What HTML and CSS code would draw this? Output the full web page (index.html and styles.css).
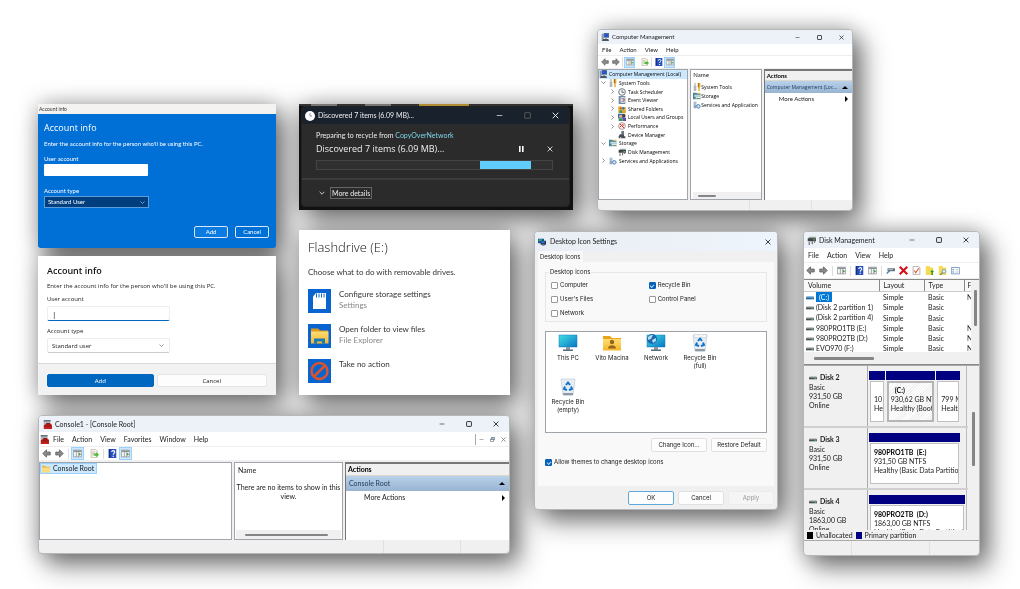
FILE: index.html
```html
<!DOCTYPE html>
<html lang="en">
<head>
<meta charset="utf-8">
<title>Windows</title>
<link rel="stylesheet" href="styles.css">
</head>
<body>
<svg class="sprite" aria-hidden="true">
  <defs>
    <linearGradient id="screen" x1="0" y1="0" x2="1" y2="1"><stop offset="0" stop-color="#3fe0e4"/><stop offset="1" stop-color="#0a74c4"/></linearGradient>
    <linearGradient id="gold" x1="0" y1="0" x2="0" y2="1"><stop offset="0" stop-color="#ffdc74"/><stop offset="1" stop-color="#f5b72c"/></linearGradient>
  </defs>
  <symbol id="min" viewBox="0 0 10 10"><path d="M1 5h8" stroke="currentColor" fill="none"/></symbol>
  <symbol id="max" viewBox="0 0 10 10"><rect x="1" y="1" width="8" height="8" rx="1" stroke="currentColor" stroke-width="1.5" fill="none"/></symbol>
  <symbol id="close" viewBox="0 0 10 10"><path d="M1 1l8 8M9 1l-8 8" stroke="currentColor" stroke-width="1.4" fill="none"/></symbol>
  <symbol id="restore" viewBox="0 0 10 10"><path d="M1 4h6v5H1zM3 4V1h6v5H7M1 5h6M3 2h6" stroke="currentColor" stroke-width="1.2" fill="none"/></symbol>
  <symbol id="down" viewBox="0 0 10 10"><path d="M1 3l4 4 4-4" stroke="currentColor" stroke-width="1.4" fill="none"/></symbol>
  <symbol id="right" viewBox="0 0 10 10"><path d="M3 1l4 4-4 4" stroke="currentColor" stroke-width="1.4" fill="none"/></symbol>
  <symbol id="back" viewBox="0 0 12 12"><path d="M1 6l5-5v3h5v4H6v3z" fill="#8b8b8b" stroke="#5b5b5b"/></symbol>
  <symbol id="forward" viewBox="0 0 12 12"><path d="M11 6L6 1v3H1v4h5v3z" fill="#8b8b8b" stroke="#5b5b5b"/></symbol>
  <symbol id="pane" viewBox="0 0 12 12"><path d="M.5 1.500h11v9H.5z" fill="#f4f4f4" stroke="#8a8f94"/><path d="M1 2h10v2H1z" fill="#8a8f94"/><path d="M4.500 4v6.500M7.500 4v6.500" stroke="#8a8f94"/><path d="M8 5l3 2-3 2z" fill="#3aa541"/></symbol>
  <symbol id="export" viewBox="0 0 12 12"><path d="M1.500.5h6l2 2v9h-8z" fill="#fbf8e8" stroke="#b5b19c"/><path d="M3 4h4M3 6h3M3 8h3" stroke="#aaa"/><path d="M5.500 6h3V4l3.500 3.500L8.500 11V9h-3z" fill="#4dbb36"/></symbol>
  <symbol id="help" viewBox="0 0 12 12"><path d="M1 0h10v12H1z" fill="#2a4fc0"/><path d="M1 0h2v12H1z" fill="#173184"/><path d="M5 4c0-2.500 4-2.300 4 0 0 1.500-2 1.500-2 3.500M7 9v1.500" stroke="#fff" stroke-width="1.500" fill="none"/></symbol>
  <symbol id="pc" viewBox="0 0 12 12"><path d="M1 1h3v9H1z" fill="#8a98a8"/><path d="M4 0h8v7H4z" fill="#5f6f84"/><path d="M5 1h6v5H5z" fill="#2452d8"/><path d="M3 9h8l1 3H1z" fill="#4e565e"/><path d="M6 7h3v2H6z" fill="#9aa4ae"/></symbol>
  <symbol id="tools" viewBox="0 0 12 12"><path d="M2 0h2v4h1v8H1V4h1z" fill="#b4b8bc"/><path d="M7 0h4v6l-1 1v5H8V7L7 6z" fill="#e6a623"/><path d="M8 0h1v6H8z" fill="#85621c"/></symbol>
  <symbol id="clock" viewBox="0 0 12 12"><circle cx="6" cy="6" r="5" fill="#f3f7fb" stroke="#6e7a86" stroke-width="1.500"/><path d="M6 3v3.500h3" stroke="#333" fill="none"/></symbol>
  <symbol id="event" viewBox="0 0 12 12"><path d="M1 0h10v12H1z" fill="#7588a8"/><path d="M4 2h6v8H4z" fill="#f7efe0"/><path d="M5 4h4M5 8h4" stroke="#2f5fbe"/><path d="M6 6l4-2v3z" fill="#d43b2f"/></symbol>
  <symbol id="shared" viewBox="0 0 12 12"><path d="M0 2h5l1 1h6v9H0z" fill="#f1c64f"/><circle cx="4" cy="5" r="2" fill="#d4702f"/><circle cx="8" cy="5" r="2" fill="#3b73c2"/><path d="M2 8h4v4H2z" fill="#38995c"/><path d="M6 8h5v4H6z" fill="#e8953c"/></symbol>
  <symbol id="users" viewBox="0 0 12 12"><path d="M0 1h10v7H0z" fill="#3b68ba"/><circle cx="4" cy="5" r="2.400" fill="#e2b183"/><circle cx="9" cy="4" r="2.400" fill="#5a3d2a"/><path d="M1 8h6v4H1z" fill="#3d9657"/><path d="M7 7h5v5H7z" fill="#5b4fb0"/></symbol>
  <symbol id="perf" viewBox="0 0 12 12"><circle cx="6" cy="6" r="5" fill="#fff" stroke="#8b5a5a"/><path d="M3 3l6 6M3 8l3-4 3 1" stroke="#d6322b" stroke-width="1.500" fill="none"/></symbol>
  <symbol id="device" viewBox="0 0 12 12"><path d="M5 0h4v5H5z" fill="#6c7680"/><path d="M1 8l2-3h6v3zM1 8h10v3H1z" fill="#454c54"/><path d="M3 9h2v1H3z" fill="#fff"/></symbol>
  <symbol id="storage" viewBox="0 0 12 12"><path d="M0 1h5l1 1h5v9H0z" fill="#4a8695"/><path d="M2 4h10v3H2z" fill="#bcd9df"/><path d="M4 7h8v5H4z" fill="#e3e9eb"/><path d="M5 9h6v1H5z" fill="#3f8246"/><path d="M7 1h4v2H7z" fill="#e5bd45"/></symbol>
  <symbol id="drive" viewBox="0 0 12 12"><path d="M1 3h10l1 2H0z" fill="#c3c7ca"/><path d="M0 5h12v3H0z" fill="#4b4f52"/><path d="M8 6h3v1H8z" fill="#4edb63"/></symbol>
  <symbol id="drivesel" viewBox="0 0 12 12"><path d="M1 3h10l1 2H0z" fill="#8dbbe2"/><path d="M0 5h12v3H0z" fill="#1f5f9c"/><path d="M8 6h3v1H8z" fill="#3bb0c0"/></symbol>
  <symbol id="diskman" viewBox="0 0 12 12"><path d="M3 1h9l-1 3H1z" fill="#9a9fa3"/><path d="M1 3h11v4H1z" fill="#3e4346"/><path d="M3 8v4M7 7v4M10 7v2" stroke="#666" stroke-width="1.500"/><path d="M8 4.500h3v1H8z" fill="#67d66c"/></symbol>
  <symbol id="services" viewBox="0 0 12 12"><path d="M1 1h4v10H1z" fill="#8fa5bc"/><path d="M2 3h2M2 5h2" stroke="#fff"/><circle cx="8" cy="8" r="2.700" fill="#cfe1f4" stroke="#5684b5" stroke-width="1.500"/></symbol>
  <symbol id="folder" viewBox="0 0 12 12"><path d="M0 1h5l1 1.500h6V11H0z" fill="#e6b949"/><path d="M0 4h12v7H0z" fill="#fbdc83"/></symbol>
  <symbol id="mmc" viewBox="0 0 12 12"><path d="M1 0h9v7H1z" fill="#aeb5bd"/><path d="M1 0h9v2H1z" fill="#69737e"/><path d="M3 6l2-2h4l2 2h1v6H1V7z" fill="#c5201f"/><path d="M5 6V5h4v1M2 8h9" stroke="#641313" fill="none"/></symbol>
  <symbol id="redx" viewBox="0 0 12 12"><path d="M1 1l10 10M11 1L1 11" stroke="#d60b17" stroke-width="2.800"/></symbol>
  <symbol id="check" viewBox="0 0 12 12"><path d="M1.500.5h7l2 2v9h-9z" fill="#fff" stroke="#9b9b9b"/><path d="M3 6l2 3 4-6" stroke="#e4572b" stroke-width="1.500" fill="none"/></symbol>
  <symbol id="folderup" viewBox="0 0 12 12"><path d="M1 0h5l1 2h4v10H1z" fill="#f7da57"/><path d="M8.500 12V8H7l2.500-3L12 8h-1.500v4z" fill="#299b2b"/></symbol>
  <symbol id="search" viewBox="0 0 12 12"><path d="M1 0h5l1 2h4v10H1z" fill="#f7da57"/><circle cx="8" cy="7" r="2.500" fill="#d9ecfa" stroke="#6290b8"/><path d="M6 9l-3 3" stroke="#6b7b88" stroke-width="1.500"/></symbol>
  <symbol id="props" viewBox="0 0 12 12"><path d="M.5 2h11v8.500H.5z" fill="#fff" stroke="#5d86b4"/><path d="M2 5h2M2 8h2" stroke="#2d77c9" stroke-width="1.500"/><path d="M6 5h4M6 8h4" stroke="#aaa"/></symbol>
  <symbol id="cable" viewBox="0 0 12 12"><path d="M2 3h10v4H2z" fill="#6c7479"/><path d="M3 4h6v1H3z" fill="#c6d6df"/><path d="M1 10l4-4" stroke="#4584b0" stroke-width="2"/></symbol>
  <symbol id="monitor" viewBox="0 0 20 18"><path d="M1 1h18v12H1z" fill="url(#screen)" stroke="#1278b4" stroke-width=".5"/><path d="M8 13h4v3H8z" fill="#8c9aa5"/><path d="M5 15.500h10V17H5z" fill="#5d6d79"/></symbol>
  <symbol id="network" viewBox="0 0 20 18"><use href="#monitor"/><circle cx="6" cy="5" r="5" fill="#1a68ad"/><path d="M2 3c2-2 4-2 5-2L5 5 2 6zM6 6l4-2v3L7 9z" fill="#b3dcf2"/></symbol>
  <symbol id="userfolder" viewBox="0 0 20 18"><path d="M1 2h7l2 2h9v4H1z" fill="#e8a51b"/><path d="M1 5h18v11.500H1z" fill="url(#gold)"/><circle cx="10" cy="8" r="2.200" fill="#96641a"/><path d="M6 14.500c0-4.500 8-4.500 8 0z" fill="#96641a"/></symbol>
  <symbol id="bin" viewBox="0 0 20 18"><path d="M3 1h14l-2 16H5z" fill="#e7edf2" stroke="#c2cbd2" stroke-width=".7"/><path d="M5 15h10l-.3 2.300H5.300z" fill="#8f9aa2"/><path d="M8 7l2-2.500L12 7M13 8.500l1 2.500-3 1M9 12l-3-1 1-2.500" fill="none" stroke="#0d72cd" stroke-width="2"/></symbol>
  <symbol id="fullbin" viewBox="0 0 20 18"><use href="#bin"/><path d="M3 2l3-2 2 1 3-1 2 1 3-1 1 3-3 1-3-1-3 1-4-1z" fill="#f9fafb" stroke="#aeb6bd" stroke-width=".5"/></symbol>
  <symbol id="display" viewBox="0 0 12 12"><path d="M0 1h9v7H0z" fill="#1d4ea8"/><path d="M1 2h5v3H1z" fill="#35b84b"/><path d="M4 4h8v6H4z" fill="#1f2f55"/><path d="M5 5h5v3H5z" fill="#2c7de0"/><path d="M6 10h4v2H6z" fill="#8b98a5"/></symbol>
  <symbol id="sdcard" viewBox="0 0 23 23"><path d="M8 3.500h10v16H5V7z" fill="#fff"/><path d="M8.500 4v4M11 4v4M13.500 4v4M16 4v4" stroke="#0a64cf"/></symbol>
  <symbol id="explorer" viewBox="0 0 23 23"><path d="M3 4h7l2 2h8v5H3z" fill="#dc9a1d"/><path d="M3 7h17.500v12H3z" fill="url(#gold)"/><path d="M6 19v-5h11v5h-3v-2H9v2z" fill="#187cb6"/></symbol>
  <symbol id="noaction" viewBox="0 0 23 23"><circle cx="11.500" cy="11.500" r="8" fill="none" stroke="#d9532c" stroke-width="2.500"/><path d="M6 17L17 6" stroke="#d9532c" stroke-width="2.500"/></symbol>
</svg>

<main class="desktop">

  <section class="win oobe">
    <header class="oobe-title">Account info</header>
    <form class="oobe-body">
      <h2>Account info</h2>
      <p>Enter the account info for the person who'll be using this PC.</p>
      <label for="ua1">User account</label>
      <input id="ua1" type="text">
      <label for="at1">Account type</label>
      <div class="pick"><select id="at1"><option>Standard User</option></select><svg><use href="#down"/></svg></div>
      <div class="oobe-actions"><button type="button" class="add">Add</button><button type="button">Cancel</button></div>
    </form>
  </section>

  <section class="win modern">
    <form>
      <div class="modern-body">
        <h2>Account info</h2>
        <p>Enter the account info for the person who'll be using this PC.</p>
        <label for="ua2">User account</label>
        <input id="ua2" type="text" value="|">
        <label for="at2">Account type</label>
        <div class="pick"><select id="at2"><option>Standard user</option></select><svg><use href="#down"/></svg></div>
      </div>
      <div class="modern-actions"><button type="button" class="primary">Add</button><button type="button">Cancel</button></div>
    </form>
  </section>

  <section class="win recycle">
    <div class="behind"><i></i><i></i><i></i></div>
    <div class="recycle-inner">
      <header><svg class="clock"><circle cx="5" cy="5" r="5" fill="#fff"/><path d="M5 2v3h2" stroke="#999" fill="none"/></svg><span>Discovered 7 items (6.09 MB)...</span>
        <div class="caption"><button aria-label="Minimize"><svg><use href="#min"/></svg></button><button aria-label="Maximize" class="off"><svg><use href="#max"/></svg></button><button aria-label="Close"><svg><use href="#close"/></svg></button></div>
      </header>
      <div class="recycle-body">
        <p>Preparing to recycle from <a href="#">CopyOverNetwork</a></p>
        <div class="status"><strong>Discovered 7 items (6.09 MB)...</strong><button aria-label="Pause"><svg viewBox="0 0 6 6"><path d="M1 0h1.600v6H1zM4 0h1.600v6H4z" fill="#fff"/></svg></button><button aria-label="Cancel"><svg><use href="#close"/></svg></button></div>
        <div class="progress"><span></span></div>
      </div>
      <footer><svg><use href="#down"/></svg><button>More details</button></footer>
    </div>
  </section>

  <section class="win flash">
    <h2>Flashdrive (E:)</h2>
    <p>Choose what to do with removable drives.</p>
    <ul>
      <li><svg><use href="#sdcard"/></svg><div>Configure storage settings<small>Settings</small></div></li>
      <li><svg><use href="#explorer"/></svg><div>Open folder to view files<small>File Explorer</small></div></li>
      <li><svg><use href="#noaction"/></svg><div>Take no action</div></li>
    </ul>
  </section>

  <section class="win mmc manage">
    <header class="title"><svg class="ico"><use href="#pc"/></svg><span>Computer Management</span>
      <div class="caption"><button aria-label="Minimize"><svg><use href="#min"/></svg></button><button aria-label="Maximize"><svg><use href="#max"/></svg></button><button aria-label="Close"><svg><use href="#close"/></svg></button></div></header>
    <nav class="menu"><button>File</button><button>Action</button><button>View</button><button>Help</button></nav>
    <div class="tools"><button aria-label="Back"><svg><use href="#back"/></svg></button><button aria-label="Forward"><svg><use href="#forward"/></svg></button><hr><button class="on" aria-label="Tree"><svg><use href="#pane"/></svg></button><button class="apart" aria-label="Export"><svg><use href="#export"/></svg></button><hr><button aria-label="Help"><svg><use href="#help"/></svg></button><button class="on" aria-label="Actions"><svg><use href="#pane"/></svg></button></div>
    <div class="panes">
      <ul class="pane tree">
        <li class="l0 sel"><svg class="ico"><use href="#pc"/></svg>Computer Management (Local)</li>
        <li class="l1"><svg class="tw"><use href="#down"/></svg><svg class="ico"><use href="#tools"/></svg>System Tools</li>
        <li class="l2"><svg class="tw"><use href="#right"/></svg><svg class="ico"><use href="#clock"/></svg>Task Scheduler</li>
        <li class="l2"><svg class="tw"><use href="#right"/></svg><svg class="ico"><use href="#event"/></svg>Event Viewer</li>
        <li class="l2"><svg class="tw"><use href="#right"/></svg><svg class="ico"><use href="#shared"/></svg>Shared Folders</li>
        <li class="l2"><svg class="tw"><use href="#right"/></svg><svg class="ico"><use href="#users"/></svg>Local Users and Groups</li>
        <li class="l2"><svg class="tw"><use href="#right"/></svg><svg class="ico"><use href="#perf"/></svg>Performance</li>
        <li class="l2"><svg class="tw"></svg><svg class="ico"><use href="#device"/></svg>Device Manager</li>
        <li class="l1"><svg class="tw"><use href="#down"/></svg><svg class="ico"><use href="#storage"/></svg>Storage</li>
        <li class="l2"><svg class="tw"></svg><svg class="ico"><use href="#diskman"/></svg>Disk Management</li>
        <li class="l1"><svg class="tw"><use href="#right"/></svg><svg class="ico"><use href="#services"/></svg>Services and Applications</li>
      </ul>
      <div class="pane list">
        <div class="name">Name</div>
        <ul>
          <li><svg class="ico"><use href="#tools"/></svg>System Tools</li>
          <li><svg class="ico"><use href="#storage"/></svg>Storage</li>
          <li><svg class="ico"><use href="#services"/></svg>Services and Application</li>
        </ul>
        <div class="hscroll"><span></span></div>
      </div>
      <aside class="pane actions"><h3>Actions</h3><div class="bar"><span>Computer Management (Loc...</span><i class="up"></i></div><button>More Actions<i class="side"></i></button></aside>
    </div>
    <footer class="statusbar"><span></span><span></span><span></span></footer>
  </section>

  <section class="win icons">
    <header class="title"><svg class="ico"><use href="#display"/></svg><span>Desktop Icon Settings</span>
      <div class="caption"><button aria-label="Close"><svg><use href="#close"/></svg></button></div></header>
    <form>
      <button type="button" class="tab">Desktop Icons</button>
      <div class="page">
        <fieldset><legend>Desktop icons</legend>
          <label><input type="checkbox">Computer</label><label><input type="checkbox" checked>Recycle Bin</label>
          <label><input type="checkbox">User's Files</label><label><input type="checkbox">Control Panel</label>
          <label><input type="checkbox">Network</label>
        </fieldset>
        <ul class="grid">
          <li><svg><use href="#monitor"/></svg>This PC</li>
          <li><svg><use href="#userfolder"/></svg>Vito Macina</li>
          <li><svg><use href="#network"/></svg>Network</li>
          <li><svg><use href="#fullbin"/></svg>Recycle Bin<br>(full)</li>
          <li><svg><use href="#bin"/></svg>Recycle Bin<br>(empty)</li>
        </ul>
        <div class="row"><button type="button">Change Icon...</button><button type="button">Restore Default</button></div>
        <label class="allow"><input type="checkbox" checked>Allow themes to change desktop icons</label>
      </div>
      <div class="ok-row"><button type="button" class="default">OK</button><button type="button">Cancel</button><button type="button" disabled>Apply</button></div>
    </form>
  </section>

  <section class="win mmc big console">
    <header class="title"><svg class="ico"><use href="#mmc"/></svg><span>Console1 - [Console Root]</span>
      <div class="caption"><button aria-label="Minimize"><svg><use href="#min"/></svg></button><button aria-label="Maximize"><svg><use href="#max"/></svg></button><button aria-label="Close"><svg><use href="#close"/></svg></button></div></header>
    <nav class="menu"><svg class="ico"><use href="#mmc"/></svg><button>File</button><button>Action</button><button>View</button><button>Favorites</button><button>Window</button><button>Help</button>
      <div class="mdi"><button aria-label="Minimize child"><svg><use href="#min"/></svg></button><button aria-label="Restore child"><svg><use href="#restore"/></svg></button><button aria-label="Close child"><svg><use href="#close"/></svg></button></div></nav>
    <div class="tools"><button aria-label="Back"><svg><use href="#back"/></svg></button><button aria-label="Forward"><svg><use href="#forward"/></svg></button><hr><button class="on" aria-label="Tree"><svg><use href="#pane"/></svg></button><button class="apart" aria-label="Export"><svg><use href="#export"/></svg></button><hr><button aria-label="Help"><svg><use href="#help"/></svg></button><button class="on" aria-label="Actions"><svg><use href="#pane"/></svg></button></div>
    <div class="panes">
      <ul class="pane tree"><li class="sel"><svg class="ico"><use href="#folder"/></svg>Console Root</li></ul>
      <div class="pane list"><div class="name">Name</div><p>There are no items to show in this view.</p><div class="hscroll"><span></span></div></div>
      <aside class="pane actions"><h3>Actions</h3><div class="bar"><span>Console Root</span><i class="up"></i></div><button>More Actions<i class="side"></i></button></aside>
    </div>
    <footer class="statusbar"><span></span><span></span><span></span></footer>
  </section>

  <section class="win mmc big disks">
    <header class="title"><svg class="ico"><use href="#diskman"/></svg><span>Disk Management</span>
      <div class="caption"><button aria-label="Minimize"><svg><use href="#min"/></svg></button><button aria-label="Maximize"><svg><use href="#max"/></svg></button><button aria-label="Close"><svg><use href="#close"/></svg></button></div></header>
    <nav class="menu"><button>File</button><button>Action</button><button>View</button><button>Help</button></nav>
    <div class="tools"><button aria-label="Back"><svg><use href="#back"/></svg></button><button aria-label="Forward"><svg><use href="#forward"/></svg></button><hr><button aria-label="Tree"><svg><use href="#pane"/></svg></button><hr><button aria-label="Help"><svg><use href="#help"/></svg></button><button aria-label="Panes"><svg><use href="#pane"/></svg></button><hr><button aria-label="Connect"><svg><use href="#cable"/></svg></button><button aria-label="Delete"><svg><use href="#redx"/></svg></button><button aria-label="Check"><svg><use href="#check"/></svg></button><button aria-label="Up"><svg><use href="#folderup"/></svg></button><button aria-label="Find"><svg><use href="#search"/></svg></button><button aria-label="Properties"><svg><use href="#props"/></svg></button></div>
    <div class="volumes">
      <table>
        <colgroup><col class="c1"><col class="c2"><col class="c3"><col></colgroup>
        <thead><tr><th>Volume</th><th>Layout</th><th>Type</th><th>F</th></tr></thead>
        <tbody>
          <tr class="cur"><td><svg class="ico"><use href="#drivesel"/></svg><span>(C:)</span></td><td>Simple</td><td>Basic</td><td>N</td></tr>
          <tr><td><svg class="ico"><use href="#drive"/></svg>(Disk 2 partition 1)</td><td>Simple</td><td>Basic</td><td></td></tr>
          <tr><td><svg class="ico"><use href="#drive"/></svg>(Disk 2 partition 4)</td><td>Simple</td><td>Basic</td><td></td></tr>
          <tr><td><svg class="ico"><use href="#drive"/></svg>980PRO1TB (E:)</td><td>Simple</td><td>Basic</td><td>N</td></tr>
          <tr><td><svg class="ico"><use href="#drive"/></svg>980PRO2TB (D:)</td><td>Simple</td><td>Basic</td><td>N</td></tr>
          <tr><td><svg class="ico"><use href="#drive"/></svg>EVO970 (F:)</td><td>Simple</td><td>Basic</td><td>N</td></tr>
        </tbody>
      </table>
      <div class="vscroll"><span></span></div>
      <div class="hscroll"><span></span></div>
    </div>
    <div class="map">
      <div class="disk-list">
        <div class="disk"><div class="info"><b><svg class="ico"><use href="#drive"/></svg>Disk 2</b>Basic<br>931,50 GB<br>Online</div>
          <div class="parts three"><div class="part"><p><br>10<br>He</p></div><div class="part hatch"><p><b>(C:)</b><br>930,62 GB NTFS<br>Healthy (Boot)</p></div><div class="part"><p><br>799 MB<br>Healthy</p></div></div></div>
        <div class="disk"><div class="info"><b><svg class="ico"><use href="#drive"/></svg>Disk 3</b>Basic<br>931,50 GB<br>Online</div>
          <div class="parts"><div class="part"><p><b>980PRO1TB &nbsp;(E:)</b><br>931,50 GB NTFS<br>Healthy (Basic Data Partition)</p></div></div></div>
        <div class="disk"><div class="info"><b><svg class="ico"><use href="#drive"/></svg>Disk 4</b>Basic<br>1863,00 GB<br>Online</div>
          <div class="parts wide"><div class="part"><p><b>980PRO2TB &nbsp;(D:)</b><br>1863,00 GB NTFS<br>Healthy (Basic Data Partition)</p></div></div></div>
      </div>
      <div class="vscroll"><span></span></div>
    </div>
    <div class="legend"><i></i>Unallocated<i class="navy"></i>Primary partition</div>
    <footer class="statusbar"><span></span><span></span><span></span></footer>
  </section>
</main>
</body>
</html>
```
FILE: styles.css
```css
* { box-sizing: border-box; margin: 0; padding: 0; }
body { background: #fff; color: #1a1a1a; font-family: Lato, "Open Sans", sans-serif; }
.sprite { position: absolute; width: 0; height: 0; }
ul { list-style: none; }
svg { display: block; flex: none; width: 8px; height: 8px; }
button, input, select { font: inherit; color: inherit; border: 0; background: none; }
select { appearance: none; width: 100%; }
a { text-decoration: none; }

/* column fractions follow the window; each window starts on a row line */
.desktop {
  display: grid;
  min-height: 100vh;
  grid-template-columns:
    minmax(0, 38fr) minmax(0, 238fr) minmax(0, 23fr) minmax(0, 211fr)
    minmax(0, 24fr) minmax(0, 39fr) minmax(0, 24fr) minmax(0, 181fr)
    minmax(0, 25fr) minmax(0, 50fr) minmax(0, 127fr) minmax(0, 40fr);
  grid-template-rows: 29px 75px 126px 1px 25px 159px 1fr;
  filter: drop-shadow(0 0 11px rgba(0, 0, 0, .28)) drop-shadow(9px 11px 12px rgba(0, 0, 0, .48));
}
.win { align-self: start; overflow: hidden; background: #fff; }
.oobe { grid-area: 3 / 2 / 8 / 3; }
.modern { grid-area: 6 / 2 / 8 / 3; }
.recycle { grid-area: 3 / 4 / 8 / 7; }
.flash { grid-area: 4 / 4 / 8 / 5; }
.manage { grid-area: 2 / 8 / 8 / 11; }
.icons { grid-area: 5 / 6 / 8 / 9; }
.disks { grid-area: 5 / 10 / 8 / 12; }
.console { grid-area: 7 / 2 / 8 / 5; }

.pick { position: relative; }
.pick svg { position: absolute; right: 4px; top: 4px; width: 5px; height: 5px; }

/* account dialogs */
.oobe { font-size: 6px; line-height: 8px; background: #006fd6; color: #fff; border-radius: 0 0 3px 3px; }
.oobe-title { background: #f5f3f2; color: #333; font-size: 5px; line-height: 10px; padding-left: 1px; }
.oobe-body { padding: 8px 7px 10px 6px; }
.oobe h2 { font: 9px/12px "Open Sans", sans-serif; margin-bottom: 6px; }
.oobe p { margin-bottom: 7px; }
.oobe label { display: block; margin-bottom: 1px; }
.oobe input { display: block; width: 104px; height: 12px; background: #fff; color: #000; border-radius: 1px; margin-bottom: 11px; }
.oobe .pick { width: 105px; margin-bottom: 18px; }
.oobe .pick svg { color: #9cc4ea; }
.oobe select { display: block; height: 12px; background: #003e7e; border: 1px solid #5a9fdc; padding: 0 3px; }
.oobe-actions { display: flex; justify-content: flex-end; gap: 7px; }
.oobe-actions button { width: 34px; height: 12px; border: 1px solid #d5e8fa; border-radius: 2px; }
.oobe-actions .add { background: #0a7be0; }

.modern { font: 6px/8px "Open Sans", sans-serif; color: #222; }
.modern-body { padding: 9px 9px 10px; }
.modern h2 { font-size: 9px; line-height: 12px; font-weight: 600; margin-bottom: 5px; color: #111; }
.modern p { margin-bottom: 5px; }
.modern label { display: block; margin-bottom: 3px; }
.modern input { display: block; width: 123px; height: 15px; border: 1px solid #eee; border-bottom: 1px solid #0067c0; border-radius: 2px; padding: 0 4px; font-size: 8px; margin-bottom: 6px; }
.modern .pick { width: 123px; }
.modern .pick svg { top: 5px; right: 6px; color: #777; }
.modern select { display: block; height: 15px; border: 1px solid #ececec; border-bottom-color: #ccc; border-radius: 2px; padding: 0 4px; }
.modern-actions { display: grid; grid-template-columns: 107fr 111fr; gap: 3px; background: #f2f2f2; border-top: 1px solid #d8dad9; padding: 10px 9px 8px; }
.modern-actions button { height: 13px; background: #fdfdfd; border: 1px solid #e5e5e5; border-radius: 2px; }
.modern-actions .primary { background: #0067c0; border-color: #0067c0; color: #fff; }

/* recycle progress */
.recycle { background: #111; padding-bottom: 3px; color: #eee; font: 7px/9px Lato, sans-serif; }
.behind { height: 2px; display: flex; padding-left: 12px; gap: 28px; background: #333; }
.behind i { width: 26px; background: #777; }
.behind i:last-child { width: 50px; background: #b08c35; }
.recycle-inner { margin: 0 3px 0 2px; background: #2b2b2b; border: 1px solid #222; border-radius: 4px; overflow: hidden; }
.recycle header { display: flex; align-items: center; height: 17px; padding-left: 3px; gap: 3px; background: #19212c; }
.recycle .clock { width: 10px; height: 10px; }
.recycle .caption { margin-left: auto; display: flex; gap: 1px; }
.caption button { display: grid; place-items: center; }
.recycle .caption button { width: 27px; height: 17px; }
.recycle .caption svg { width: 7px; height: 7px; }
.recycle .caption .off { color: #555; }
.recycle-body { padding: 7px 16px 8px 14px; }
.recycle a { color: #7cd3e8; }
.status { display: flex; align-items: center; height: 13px; margin: 2px 0 5px; }
.status strong { flex: 1; font: 9px/13px "Open Sans", sans-serif; }
.status button { width: 12px; margin-left: 17px; display: flex; justify-content: flex-end; }
.status svg { width: 6px; height: 6px; }
.progress { height: 10px; padding-left: 163px; border: 1px solid #444; background: #303030; display: flex; }
.progress span { width: 51px; background: #61cdff; }
.recycle footer { display: flex; align-items: center; gap: 5px; height: 28px; padding-left: 17px; border-top: 2px solid #3c3c3c; }
.recycle footer svg { width: 6px; height: 6px; }
.recycle footer button { height: 12px; border: 1px solid #666; padding: 0 1px; font: 7px/9px Lato, sans-serif; }

/* autoplay */
.flash { padding: 8px 9px 12px; font-size: 8px; line-height: 11px; color: #333; }
.flash h2 { font: 300 13px/18px "Open Sans", sans-serif; color: #111; margin-bottom: 11px; }
.flash ul { display: grid; gap: 11px; margin-top: 11px; }
.flash li { display: flex; gap: 8px; }
.flash li svg { width: 23px; height: 24px; background: #0a64cf; }
.flash small { display: block; font-size: 8px; color: #888; }

/* window frame */
.title { display: flex; align-items: center; gap: 4px; padding-left: 3px; background: #edf2f9; }
.caption { margin-left: auto; display: flex; }
.title .caption svg { width: 5px; height: 5px; }
.mmc, .icons { border: 1px solid #b5b8bb; border-radius: 4px; background: #f0f0f0; }

/* management consoles */
.mmc { font-size: 6px; line-height: 8px; }
.mmc .title { height: 14px; gap: 3px; }
.mmc .caption button { width: 22px; }
.mmc .menu { display: flex; align-items: center; height: 11px; background: #fff; }
.mmc .menu button { padding: 0 4px; }
.mmc .tools { display: flex; align-items: center; height: 13px; background: #fff; border-top: 1px solid #eee; padding-left: 1px; }
.tools button { display: grid; place-items: center; width: 11px; height: 11px; }
.tools .on { background: #cce8ff; border: 1px solid #99d1ff; }
.tools hr { width: 1px; height: 10px; border: 0; background: #ddd; margin: 0 2px; }
.manage .tools hr { margin: 0 1px; }
.ico { width: 8px; height: 8px; }
.panes { display: grid; gap: 2px; padding-top: 1px; }
.manage .panes { grid-template-columns: 91fr 72fr 89fr; }
.pane { background: #fff; border: 1px solid #a0a5ab; min-width: 0; overflow: hidden; white-space: nowrap; }
.manage .pane { height: 131px; }
.manage .tree, .manage .list li, .manage .bar { font: 5px/8px "Open Sans", sans-serif; }
.manage .tree { display: grid; grid-auto-rows: 1fr; padding-bottom: 34px; color: #000; }
.tree li { display: flex; align-items: center; gap: 2px; }
.tree .sel { background: #cce8ff; padding-right: 2px; }
.tw { width: 5px; height: 5px; margin-right: 1px; color: #666; }
.l1 { padding-left: 2px; }
.l2 { padding-left: 11px; }
.list { display: flex; flex-direction: column; padding-left: 2px; }
.list .name { line-height: 10px; margin-bottom: 2px; }
.list li { display: flex; align-items: center; height: 9px; color: #000; }
.hscroll { margin-top: auto; display: flex; align-items: center; background: #f0f0f0; height: 7px; }
.hscroll span { height: 2px; border-radius: 1px; background: #858585; width: 18px; margin-left: 5px; }
.actions { border-right: 0; border-bottom: 0; border-top: 2px solid #777; border-left-color: #777; }
.actions h3 { font-size: 6px; line-height: 9px; padding-left: 2px; background: #f0f0f0; border-bottom: 1px solid #ddd8cc; color: #000; }
.bar, .manage .bar { display: flex; align-items: center; justify-content: space-between; height: 12px; padding: 0 4px 0 2px; background: linear-gradient(#b9d1ea, #98b4d2); color: #1e395b; }
.up { border: 3px solid transparent; border-top: 0; border-bottom-color: #000; }
.side { border: 3px solid transparent; border-right: 0; border-left-color: #000; }
.actions button { display: flex; justify-content: space-between; align-items: center; width: 100%; height: 11px; padding: 0 4px 0 14px; }
.statusbar { display: grid; grid-template-columns: 152fr 63fr 41fr; height: 10px; }
.statusbar span + span { border-left: 1px solid #e0e0e0; }

.big { font-size: 7px; line-height: 9px; }
.big .title { height: 16px; }
.big .title .caption svg { width: 6px; height: 6px; }
.big .caption button { width: 27px; }
.big .menu { height: 14px; }
.big .tools { height: 14px; }
.big .tools button { width: 13px; height: 13px; }
.big .tools svg, .big .title .ico, .big .menu .ico { width: 9px; height: 9px; }
.apart { margin-left: 4px; }

.console .title .ico { margin-left: 1px; }
.console .menu { padding-left: 1px; }
.console .menu .mdi { display: flex; margin-left: auto; border-left: 1px solid #aaa; }
.console .mdi button { width: 11px; padding: 3px; }
.console .mdi svg { width: 5px; height: 5px; color: #56687c; }
.console .panes { grid-template-columns: 193fr 109fr 164fr; padding-top: 2px; }
.console .pane { height: 78px; }
.console .tree { display: flex; align-items: flex-start; }
.console .tree li { border: 1px solid #99d1ff; height: 11px; gap: 3px; padding-left: 1px; }
.console .list { padding: 0 1px; }
.console .list .name { line-height: 15px; margin-bottom: 5px; padding-left: 2px; }
.console .list p { white-space: normal; text-align: center; }
.console .hscroll { height: 9px; }
.console .hscroll span { width: 83px; margin-left: 9px; }
.big .actions h3 { font-size: 7px; line-height: 11px; }
.console .bar { height: 15px; padding-left: 3px; }
.console .actions button { height: 13px; padding-left: 18px; }
.console .statusbar { grid-template-columns: 345fr 77fr 49fr; height: 13px; }

/* disk management */
.disks .tools { height: 17px; border-bottom: 1px solid #eee; padding-left: 0; }
.disks .tools hr { margin: 0 2px; }
.volumes { display: grid; grid-template-columns: minmax(0, 1fr) 8px; background: #fff; border-top: 1px solid #888; border-bottom: 1px solid #888; height: 86px; grid-template-rows: 72px 12px; }
.volumes table { table-layout: fixed; width: 100%; border-collapse: collapse; }
.volumes tr { height: 10px; }
.c1 { width: 75px; }
.c2 { width: 45px; }
.c3 { width: 40px; }
.volumes th, .volumes td { text-align: left; font-weight: 400; white-space: nowrap; overflow: hidden; line-height: 10px; padding-left: 4px; }
.volumes th { line-height: 11px; border-right: 1px solid #888; border-bottom: 1px solid #ccc; background: #f8f8f8; }
.volumes th:last-child { border-right: 0; }
.volumes td:first-child { padding-left: 2px; }
.volumes th:last-child, .volumes td:last-child { padding-left: 3px; }
.volumes td .ico { display: inline-block; vertical-align: middle; margin-right: 2px; }
.cur span { display: inline-block; background: #0078d7; color: #fff; padding: 0 3px; }
.vscroll { background: #f0f0f0; display: flex; justify-content: center; }
.vscroll span { width: 3px; border-radius: 1px; background: #858585; height: 36px; margin-top: 10px; }
.volumes .hscroll { grid-column: 1 / -1; height: 12px; margin: 0; }
.volumes .hscroll span { width: 60px; margin-left: 10px; height: 3px; }
.map { display: grid; grid-template-columns: minmax(0, 1fr) 11px; height: 165px; border-top: 1px solid #aaa; }
.map .vscroll span { height: 54px; margin-top: 46px; }
.disk-list { overflow: hidden; }
.disk { display: grid; grid-template-columns: 64px minmax(0, 1fr); height: 62px; border-bottom: 2px solid #d0d0d0; }
.info { border-right: 1px solid #aaa; padding: 6px 0 0 5px; line-height: 9px; }
.info b { display: flex; align-items: center; gap: 3px; line-height: 11px; }
.parts { display: grid; gap: 1px; padding: 5px 6px 3px 1px; border-right: 1px solid #bbb; margin-right: 1px; }
.three { grid-template-columns: 16fr 50fr 24fr; }
.wide { padding-right: 1px; }
.part { min-width: 0; display: flex; flex-direction: column; border-top: 9px solid #000080; }
.part p { flex: 1; margin: 1px; padding: 4px 3px; line-height: 9px; border: 1px solid #c0c0c0; background: #fff; white-space: nowrap; overflow: hidden; }
.part b { color: #000; }
.hatch p { border: 2px solid #b5b5b5; padding: 3px 2px; background: repeating-linear-gradient(135deg, #fff 0 1px, #f0f0f0 1px 2px); }
.hatch b { padding-left: 4px; }
.legend { display: flex; align-items: center; gap: 3px; height: 11px; padding-left: 3px; border-bottom: 1px solid #aaa; }
.legend i { width: 6px; height: 7px; background: #000; }
.legend .navy { background: #000080; }
.disks .statusbar { grid-template-columns: 48fr 78fr 51fr; height: 14px; }

/* desktop icon settings */
.icons { font: 6px/8px Inter, sans-serif; }
.icons .title { height: 19px; font: 7px/9px Lato, sans-serif; background: linear-gradient(90deg, #e8eef3, #eef4fb); }
.icons .caption button { width: 18px; }
.icons .title .caption svg { width: 6px; height: 6px; }
.icons form { padding: 0 3px 4px; }
.tab { display: block; height: 11px; padding: 0 2px; background: #f9f9f9; }
.page { background: #f9f9f9; padding: 6px 7px 20px; }
fieldset { display: grid; grid-template-columns: 100fr 115fr; row-gap: 6px; border: 1px solid #e6e6e6; padding: 5px 5px 4px; }
legend { padding: 0 1px; margin-left: -2px; }
.icons label { display: flex; align-items: center; gap: 2px; }
.icons input { appearance: none; display: grid; place-items: center; width: 7px; height: 7px; border: 1px solid #999; border-radius: 1px; background: #fff; }
.icons input:checked { background: #0560b8; border-color: #0560b8; }
.icons input:checked::before { content: ""; width: 3px; height: 2px; border: solid #b8d8f5; border-width: 0 0 1px 1px; transform: rotate(-45deg); }
.grid { display: grid; grid-template-columns: repeat(4, 44px); grid-auto-rows: 44px; height: 102px; margin: 9px 0 5px; background: #fff; border: 1px solid #9fa3aa; padding-top: 2px; }
.grid li { text-align: center; white-space: nowrap; }
.grid svg { width: 20px; height: 18px; margin: 0 auto 2px; }
.row, .ok-row { display: flex; justify-content: flex-end; gap: 4px; }
.row button, .ok-row button { height: 14px; background: #fdfdfd; border: 1px solid #e0e0e0; border-radius: 2px; }
.row button { width: 56px; }
.allow { margin-top: 6px; }
.ok-row { padding-top: 5px; }
.ok-row button { width: 46px; }
.ok-row .default { border-color: #5fa8dc; }
.ok-row button:disabled { color: #999; border-color: #ececec; background: #f5f5f5; }
```
